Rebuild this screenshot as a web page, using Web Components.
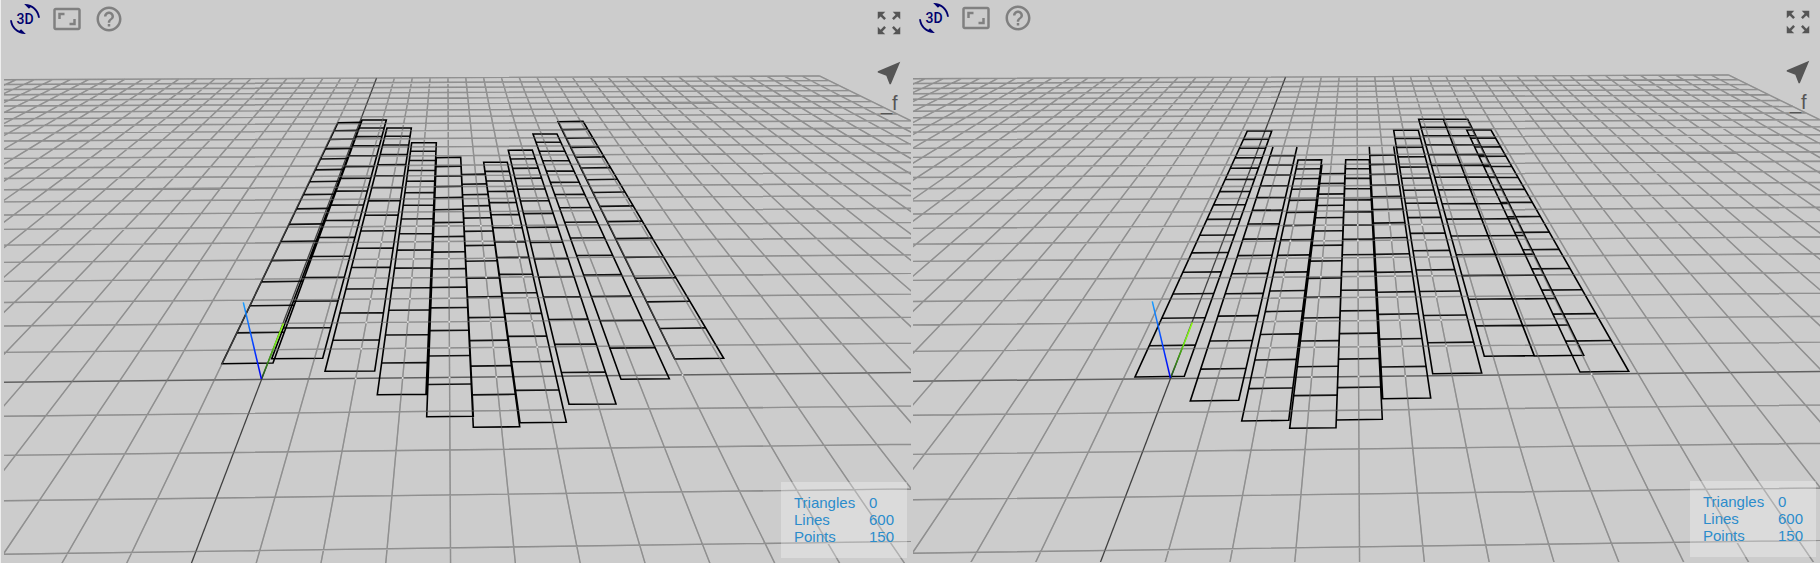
<!DOCTYPE html>
<html lang="en">
<head>
<meta charset="utf-8">
<title>Wireframe viewer</title>
<style>
html, body { margin: 0; background: #ccc; }
body { font-family: "Liberation Sans", Arial, sans-serif; }
</style>
</head>
<body>
<compare-view>
  <scene-viewer class="first" model="left"></scene-viewer>
  <scene-viewer model="right"></scene-viewer>
</compare-view>

<script>
/* Each strip: near-left, near-right, far-right, far-left corners; 'open' strips have no far edge. */
const MODELS = {
  left: [
    [218,362.7, 269,362, 357.3,121.3, 334,121.7],
    [267.7,357.7, 318.7,357.3, 382.3,119, 358,119],
    [321,370.3, 370.7,370, 407.3,127, 383,127],
    [373.3,393.7, 422,393.3, 432.3,141.7, 407.7,141.7],
    [422.7,415.7, 469.3,415.3, 456.7,156.3, 432.3,156.7],
    [469.3,426.3, 515.7,425.7, 480,164, 457,164.3, 'open'],
    [516,421.7, 562.3,421.3, 503.3,161.3, 479.7,161.3],
    [565,403.3, 612,403, 528.3,149, 504.3,149.3],
    [617,378.3, 665.3,377.7, 553,133, 529,133],
    [670.7,358, 719.7,357.3, 579,120.3, 554,120.7]
  ],
  right: [
    [222,377, 271.3,376.3, 358.7,131, 334.3,131],
    [277.3,401, 325.7,400.3, 384,147, 360,147, 'open'],
    [328.7,421, 375.7,420.3, 408.7,159.7, 385,160],
    [376.7,428.3, 423,427.7, 432.3,164.3, 409,164.5, 'open'],
    [423.3,420, 469.3,419.3, 456.3,159.7, 432.7,159.7],
    [469.7,398.7, 517.7,398, 480.7,146.3, 456.3,146.7, 'open'],
    [519.7,373.7, 568.7,373, 505.3,130.3, 480.7,130.3],
    [571.3,356.3, 621.3,355.7, 530.3,119.3, 505.7,119.3],
    [621.3,356, 670.7,355.3, 554.7,119.3, 530.3,119.3],
    [667,372, 715.7,371.3, 578,130, 553.7,130]
  ]
};

/* Camera: projects floor cell (u, v) to the view. */
const CAMERA = [47.4294, 28.9505, 257.537, -0.149181, -7.02554, 378.48, 0.00094846, 0.0653554];
const project = (u, v) => {
  const c = CAMERA, w = c[6] * u + c[7] * v + 1;
  return [(c[0] * u + c[1] * v + c[2]) / w, (c[3] * u + c[4] * v + c[5]) / w];
};
const point = p => p[0].toFixed(2) + ' ' + p[1].toFixed(2);
const segment = (a, b) => `M${point(a)}L${point(b)}`;

function floorPaths() {
  let grid = '', dots = '';
  for (let u = -25; u <= 25; u++) if (u) grid += segment(project(u, -6), project(u, 25));
  for (let v = -6; v <= 25; v++) if (v) grid += segment(project(-25, v), project(25, v));
  for (let v = 0; v <= 7; v++) for (let u = 2; u <= 6; u++) {
    if (v === 0 && u === 6) continue;
    dots += `M${point(project(u, v))}h0`;
  }
  dots += `M${point(project(9, 0))}h0`;
  return {
    grid, dots,
    axisU: segment(project(-25, 0), project(25, 0)),
    axisV: segment(project(0, -6), project(0, 25))
  };
}
function stripPaths(strips) {
  const CELLS = 15;
  let rails = '', rungs = '';
  for (const [ax, ay, bx, by, cx, cy, dx, dy, open] of strips) {
    rails += `M${dx} ${dy}L${ax} ${ay}L${bx} ${by}L${cx} ${cy}` + (open ? '' : 'Z');
    const depth = 0.0703 - (ay - 363) * 0.00008;
    for (let k = 1; k < CELLS; k++) {
      const t = k * (1 + CELLS * depth) / (CELLS * (1 + depth * k));
      rungs += segment([ax + (dx - ax) * t, ay + (dy - ay) * t], [bx + (cx - bx) * t, by + (cy - by) * t]);
    }
  }
  return { rails, rungs };
}

customElements.define('compare-view', class extends HTMLElement {
  constructor() {
    super();
    this.attachShadow({ mode: 'open' }).innerHTML = `
      <style>
        :host { display: grid; grid-template-columns: 1fr 1fr; gap: 2px; box-sizing: border-box;
                min-height: 100vh; padding-left: 3px; border-left: 1px solid #eee; background: #ccc; }
        ::slotted(*) { margin-bottom: 1px; }
        ::slotted(.first) { margin-top: 1px; margin-bottom: 0; }
      </style>
      <slot></slot>`;
  }
});

customElements.define('tool-button', class extends HTMLElement {
  constructor() {
    super();
    this.attachShadow({ mode: 'open' }).innerHTML = `
      <style>
        :host { display: block; }
        button { display: block; width: 30px; height: 30px; padding: 0; border: 0; background: none; color: inherit; cursor: pointer; }
        ::slotted(svg) { display: block; width: 30px; height: 30px; fill: currentColor; }
      </style>
      <button type="button" aria-label="${this.getAttribute('label')}"><slot></slot></button>`;
  }
});

customElements.define('stats-panel', class extends HTMLElement {
  constructor() {
    super();
    this.attachShadow({ mode: 'open' }).innerHTML = `
      <style>
        :host { display: block; box-sizing: border-box; width: 126px; height: 76px; padding: 12px 13px;
                background: rgba(255,255,255,.3); color: #2b8ccb; font-size: 15px; line-height: 17px; }
        table { border-collapse: collapse; }
        th, td { padding: 0; font-weight: normal; text-align: left; }
        th { width: 75px; }
      </style>
      <table>
        <tr><th scope="row">Triangles</th><td>0</td></tr>
        <tr><th scope="row">Lines</th><td>600</td></tr>
        <tr><th scope="row">Points</th><td>150</td></tr>
      </table>`;
  }
});

customElements.define('scene-viewer', class extends HTMLElement {
  constructor() {
    super();
    const f = floorPaths(), s = stripPaths(MODELS[this.getAttribute('model')]);
    this.attachShadow({ mode: 'open' }).innerHTML = `
      <style>
        :host { display: grid; grid-template: 1fr / 1fr; overflow: hidden; min-width: 0; }
        .scene { grid-area: 1 / 1; width: 100%; height: 100%; min-height: 0; fill: none; contain: size; }
        .overlay { grid-area: 1 / 1; display: flex; flex-direction: column; justify-content: space-between; z-index: 1; }
        .bar { display: flex; justify-content: space-between; padding: 3px 7px 0 6px; }
        .views { display: flex; gap: 12px; color: #808080; }
        .rotate { color: #00006e; }
        .side { display: flex; flex-direction: column; gap: 20px; padding-top: 4px; width: 30px; color: #555; }
        .speed { margin-top: -17px; padding-left: 7px; font-size: 20px; line-height: 24px; }
        stats-panel { align-self: flex-end; margin: 0 4px 5px 0; }
      </style>
      <svg class="scene" viewBox="0 0 907 562" preserveAspectRatio="xMinYMin slice" aria-hidden="true">
        <defs>
          <linearGradient id="z" gradientUnits="userSpaceOnUse" x1="257" y1="378" x2="239" y2="301">
            <stop stop-color="#0000f0"/><stop offset=".3" stop-color="#0028ff"/><stop offset="1" stop-color="#18a0ff"/></linearGradient>
          <linearGradient id="y" gradientUnits="userSpaceOnUse" x1="257" y1="378" x2="279" y2="322">
            <stop stop-color="#205020"/><stop offset=".5" stop-color="#48b010"/><stop offset=".6" stop-color="#70f010"/><stop offset="1" stop-color="#90ff10"/></linearGradient>
        </defs>
        <path d="${f.grid}" stroke="#8a8a8a" stroke-width="1.4"/>
        <path d="${f.axisU}" stroke="#606060" stroke-width="1.5"/>
        <path d="${f.axisV}" stroke="#404040" stroke-width="1.3"/>
        <path d="${s.rungs}" stroke="#111" stroke-width="1.6"/>
        <path d="${s.rails}" stroke="#000" stroke-width="1.6"/>
        <path d="${f.grid}" stroke="#999" stroke-width="1.2" opacity=".4"/>
        <path d="${f.dots}" stroke="#ddd" stroke-width="2" stroke-linecap="round"/>
        <path d="M257.4 378L279.4 322.5" stroke="url(#y)" stroke-width="1.5"/>
        <path d="M257.4 378L239.3 301.3" stroke="url(#z)" stroke-width="1.5"/>
      </svg>
      <div class="overlay">
        <div class="bar">
          <div class="views">
            <tool-button class="rotate" label="Rotate in 3D"><svg viewBox="0 0 24 24">
              <path d="M7.52 21.48C4.25 19.94 1.91 16.76 1.55 13H.05C.56 19.16 5.71 24 12 24l.66-.03-3.81-3.81zM12 0l-.66.03 3.81 3.81 1.33-1.33c3.27 1.55 5.61 4.72 5.96 8.48h1.5C23.44 4.84 18.29 0 12 0z"/>
              <text x="12" y="16" text-anchor="middle" font-family="Roboto, sans-serif" font-weight="500" font-size="11.2">3D</text></svg></tool-button>
            <tool-button label="Fit to view"><svg viewBox="0 0 24 24"><path d="M19 12h-2v3h-3v2h5v-5zM7 9h3V7H5v5h2V9zm14-6H3c-1.1 0-2 .9-2 2v14c0 1.1.9 2 2 2h18c1.1 0 2-.9 2-2V5c0-1.1-.9-2-2-2zm0 16.01H3V4.99h18v14.02z"/></svg></tool-button>
            <tool-button label="Help"><svg viewBox="0 0 24 24"><path d="M11 18h2v-2h-2v2zm1-16C6.48 2 2 6.48 2 12s4.48 10 10 10 10-4.48 10-10S17.52 2 12 2zm0 18c-4.41 0-8-3.59-8-8s3.59-8 8-8 8 3.59 8 8-3.59 8-8 8zm0-14c-2.21 0-4 1.79-4 4h2c0-1.1.9-2 2-2s2 .9 2 2c0 2-3 1.75-3 5h2c0-2.25 3-2.5 3-5 0-2.21-1.79-4-4-4z"/></svg></tool-button>
          </div>
          <div class="side">
            <tool-button label="Full screen"><svg viewBox="0 0 24 24"><path d="M15 3l2.3 2.3-2.89 2.87 1.42 1.42L18.7 6.7 21 9V3zM3 9l2.3-2.3 2.87 2.89 1.42-1.42L6.7 5.3 9 3H3zM9 21l-2.3-2.3 2.89-2.87-1.42-1.42L5.3 17.3 3 15v6zM21 15l-2.3 2.3-2.87-2.89-1.42 1.42 2.89 2.87L15 21h6z"/></svg></tool-button>
            <tool-button label="Fly to"><svg viewBox="0 0 24 24"><path d="M21 3L3 10.53v.98l6.84 2.65L12.48 21h.98L21 3z"/></svg></tool-button>
            <div class="speed">_f</div>
          </div>
        </div>
        <stats-panel></stats-panel>
      </div>`;
  }
});
</script>
</body>
</html>
